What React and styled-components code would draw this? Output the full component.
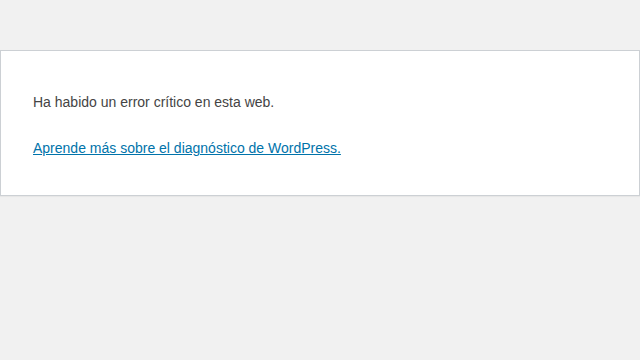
import React from 'react';
import styled, { createGlobalStyle } from 'styled-components';

const GlobalStyle = createGlobalStyle`
  html {
    background: #f1f1f1;
  }
  body {
    margin: 0;
    background: #f1f1f1;
  }
`;

const ErrorPage = styled.div`
  box-sizing: border-box;
  background: #fff;
  border: 1px solid #ccd0d4;
  color: #444;
  font-family: "Liberation Sans", Arial, sans-serif;
  margin: 50px auto 32px;
  padding: 16px 32px;
  max-width: 700px;
  box-shadow: 0 1px 1px rgba(0, 0, 0, 0.04);
`;

const Message = styled.p`
  font-size: 14px;
  line-height: 1.5;
  margin: 25px 0 20px;
`;

const Link = styled.a`
  color: #0073aa;
  text-decoration: underline;
`;

const App = () => (
  <>
    <GlobalStyle />
    <ErrorPage>
      <Message>Ha habido un error crítico en esta web.</Message>
      <Message>
        <Link href="#">Aprende más sobre el diagnóstico de WordPress.</Link>
      </Message>
    </ErrorPage>
  </>
);

export default App;
